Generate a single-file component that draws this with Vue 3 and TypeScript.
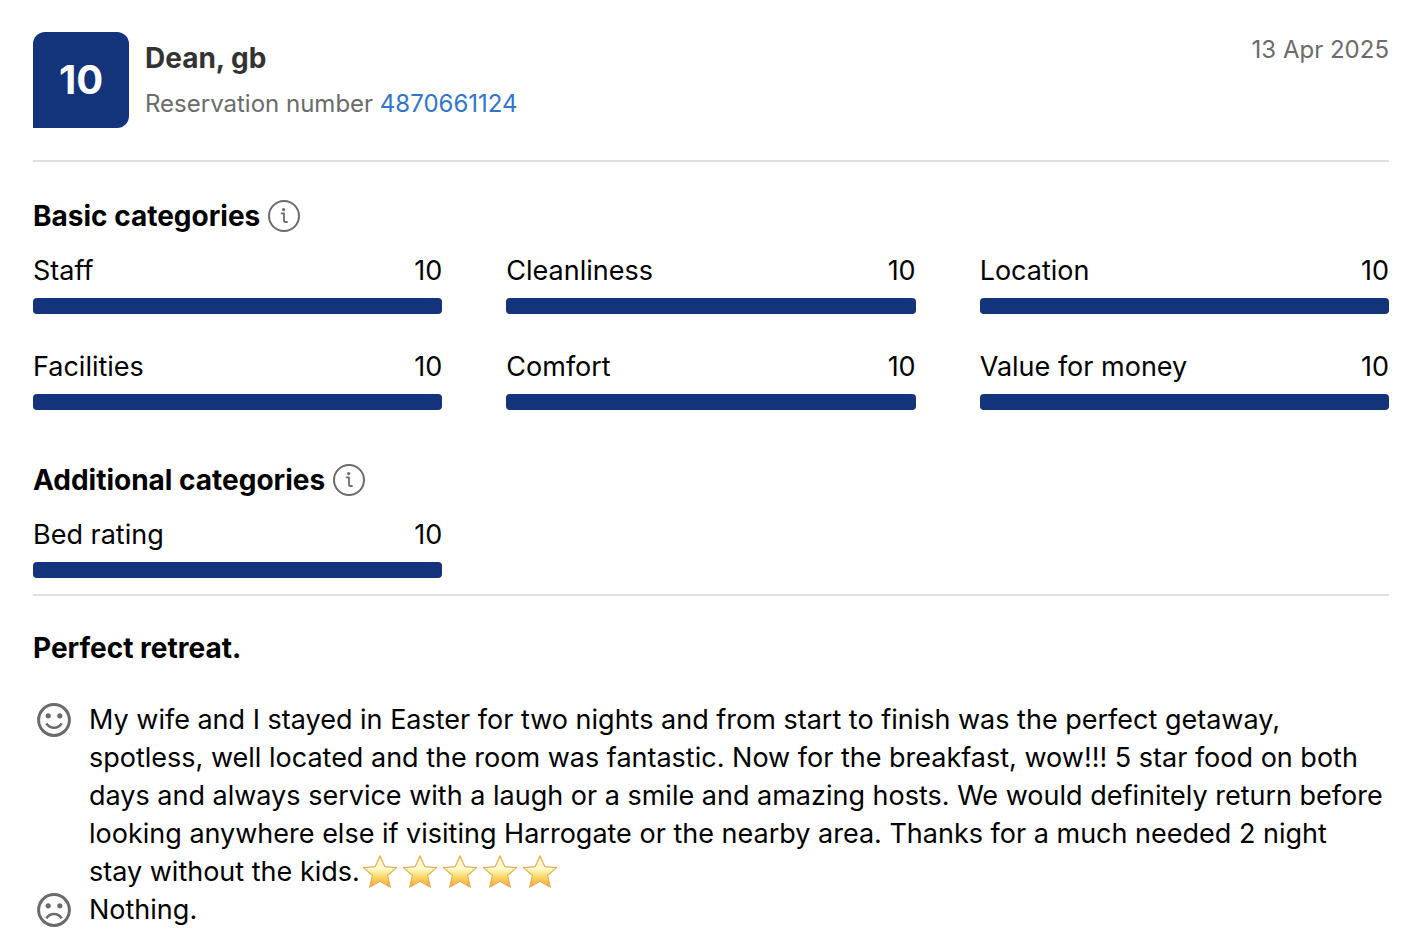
<script setup lang="ts">
interface Rating {
  label: string
  score: number
}

interface RatingGroup {
  title: string
  ratings: Rating[]
}

const groups: RatingGroup[] = [
  {
    title: 'Basic categories',
    ratings: [
      { label: 'Staff', score: 10 },
      { label: 'Cleanliness', score: 10 },
      { label: 'Location', score: 10 },
      { label: 'Facilities', score: 10 },
      { label: 'Comfort', score: 10 },
      { label: 'Value for money', score: 10 },
    ],
  },
  {
    title: 'Additional categories',
    ratings: [{ label: 'Bed rating', score: 10 }],
  },
]

const stars = 5
</script>

<template>
  <article class="review">
    <header class="top">
      <div class="score">10</div>
      <div class="guest">
        <h1 class="name">Dean, gb</h1>
        <p class="reservation">Reservation number <a href="#reservation">4870661124</a></p>
      </div>
      <time class="date" datetime="2025-04-13">13 Apr 2025</time>
    </header>

    <div class="categories">
      <section v-for="group in groups" :key="group.title" class="group">
        <div class="heading">
          <h2>{{ group.title }}</h2>
          <button type="button" class="info" :aria-label="`About ${group.title}`">
            <svg viewBox="0 0 32 32" aria-hidden="true">
              <circle cx="16" cy="16" r="15" fill="none" stroke="currentColor" stroke-width="2" />
              <circle cx="15.6" cy="9.6" r="1.6" fill="currentColor" />
              <path d="M13.6 13.4H16V20.4Q16 22 17.6 22H19" fill="none" stroke="currentColor" stroke-width="1.8" stroke-linecap="round" stroke-linejoin="round" />
            </svg>
          </button>
        </div>
        <div class="grid">
          <div v-for="rating in group.ratings" :key="rating.label" class="rating">
            <div class="caption">
              <span>{{ rating.label }}</span>
              <span>{{ rating.score }}</span>
            </div>
            <div
              class="track"
              role="meter"
              :aria-label="rating.label"
              :aria-valuenow="rating.score"
              aria-valuemin="0"
              aria-valuemax="10"
            >
              <div class="fill" :style="{ width: `${rating.score * 10}%` }"></div>
            </div>
          </div>
        </div>
      </section>
    </div>

    <section class="comments">
      <h2>Perfect retreat.</h2>
      <div class="comment">
        <svg class="face" viewBox="0 0 42 38" aria-hidden="true">
          <circle cx="21" cy="19" r="15.4" fill="none" stroke="currentColor" stroke-width="3" />
          <circle cx="15.2" cy="14.8" r="2.6" fill="currentColor" />
          <circle cx="26.8" cy="14.8" r="2.6" fill="currentColor" />
          <path d="M13.4 22.4Q16 26.8 21 26.8T28.6 22.4" fill="none" stroke="currentColor" stroke-width="2.6" />
        </svg>
        <p>
          My wife and I stayed in Easter for two nights and from start to finish was the perfect getaway, spotless, well located and the room was fantastic. Now for the breakfast, wow!!! 5 star food on both days and always service with a laugh or a smile and amazing hosts. We would definitely return before looking anywhere else if visiting Harrogate or the nearby area. Thanks for a much needed 2 night stay without the kids.<svg
            v-for="n in stars"
            :key="n"
            class="star"
            viewBox="0 0 40 38"
            aria-hidden="true"
          >
            <defs>
              <linearGradient :id="`gold-${n}`" x1="0" y1="0" x2="0" y2="1">
                <stop offset="0" stop-color="#fff3b8" />
                <stop offset="0.4" stop-color="#fffbd0" />
                <stop offset="0.62" stop-color="#fbdf78" />
                <stop offset="1" stop-color="#efa92c" />
              </linearGradient>
            </defs>
            <path
              d="M20 2.8L24.7 13.6L36.6 14.6L27.6 22.6L30.4 34.2L20 28.2L9.6 34.2L12.4 22.6L3.4 14.6L15.3 13.6Z"
              :fill="`url(#gold-${n})`"
              stroke="#e6ac58"
              stroke-width="1.2"
              stroke-linejoin="round"
            />
          </svg>
        </p>
      </div>
      <div class="comment">
        <svg class="face" viewBox="0 0 42 38" aria-hidden="true">
          <circle cx="21" cy="19" r="15.4" fill="none" stroke="currentColor" stroke-width="3" />
          <circle cx="15.2" cy="14.8" r="2.6" fill="currentColor" />
          <circle cx="26.8" cy="14.8" r="2.6" fill="currentColor" />
          <path d="M13.4 27.4Q16 23 21 23T28.6 27.4" fill="none" stroke="currentColor" stroke-width="2.6" />
        </svg>
        <p>Nothing.</p>
      </div>
    </section>
  </article>
</template>

<style>
body {
  background: #fff;
}
</style>

<style scoped>
.review {
  padding: 32px 33px 19px;
  font-family: Inter, "Liberation Sans", sans-serif;
  font-size: 27px;
  line-height: 38px;
  color: #000;
}

h1,
h2,
p {
  margin: 0;
}

h2 {
  font-size: 28px;
  font-weight: 700;
  line-height: 40px;
}

.top {
  display: flex;
  gap: 16px;
  padding-bottom: 32px;
  border-bottom: 2px solid #e0e0e0;
}

.score {
  display: flex;
  align-items: center;
  justify-content: center;
  width: 96px;
  height: 96px;
  border-radius: 12px 12px 12px 0;
  background: #13347a;
  color: #fff;
  font-size: 40px;
  font-weight: 700;
}

.guest {
  flex: 1;
  padding-top: 6px;
}

.name {
  color: #333;
  font-size: 28px;
  font-weight: 700;
  line-height: 40px;
}

.reservation {
  padding-top: 8px;
  color: #6b6b6b;
  font-size: 24px;
  line-height: 36px;
}

.reservation a {
  color: #3275c9;
  text-decoration: none;
}

.date {
  color: #6b6b6b;
  font-size: 24px;
  line-height: 36px;
}

.categories {
  display: flex;
  flex-direction: column;
  gap: 50px;
  padding: 34px 0 16px;
  border-bottom: 2px solid #e0e0e0;
}

.heading {
  display: flex;
  align-items: center;
  gap: 8px;
  margin-bottom: 14px;
}

.info {
  width: 32px;
  height: 32px;
  padding: 0;
  border: 0;
  background: none;
  color: #6b6b6b;
  cursor: pointer;
}

.info svg {
  display: block;
}

.grid {
  display: grid;
  grid-template-columns: repeat(3, 1fr);
  gap: 32px 64px;
}

.caption {
  display: flex;
  justify-content: space-between;
  line-height: 42px;
  margin-bottom: 6px;
}

.track {
  height: 16px;
  border-radius: 4px;
  background: #e0e0e0;
}

.fill {
  height: 100%;
  border-radius: 4px;
  background: #13347a;
}

.comments {
  padding-top: 32px;
}

.comments h2 {
  margin-bottom: 33px;
}

.comment {
  display: flex;
  align-items: flex-start;
  gap: 14px;
}

.comment p {
  padding-right: 4px;
}

.face {
  flex: none;
  width: 42px;
  height: 38px;
  color: #6b6b6b;
}

.star {
  width: 40px;
  height: 38px;
  vertical-align: top;
}
</style>
